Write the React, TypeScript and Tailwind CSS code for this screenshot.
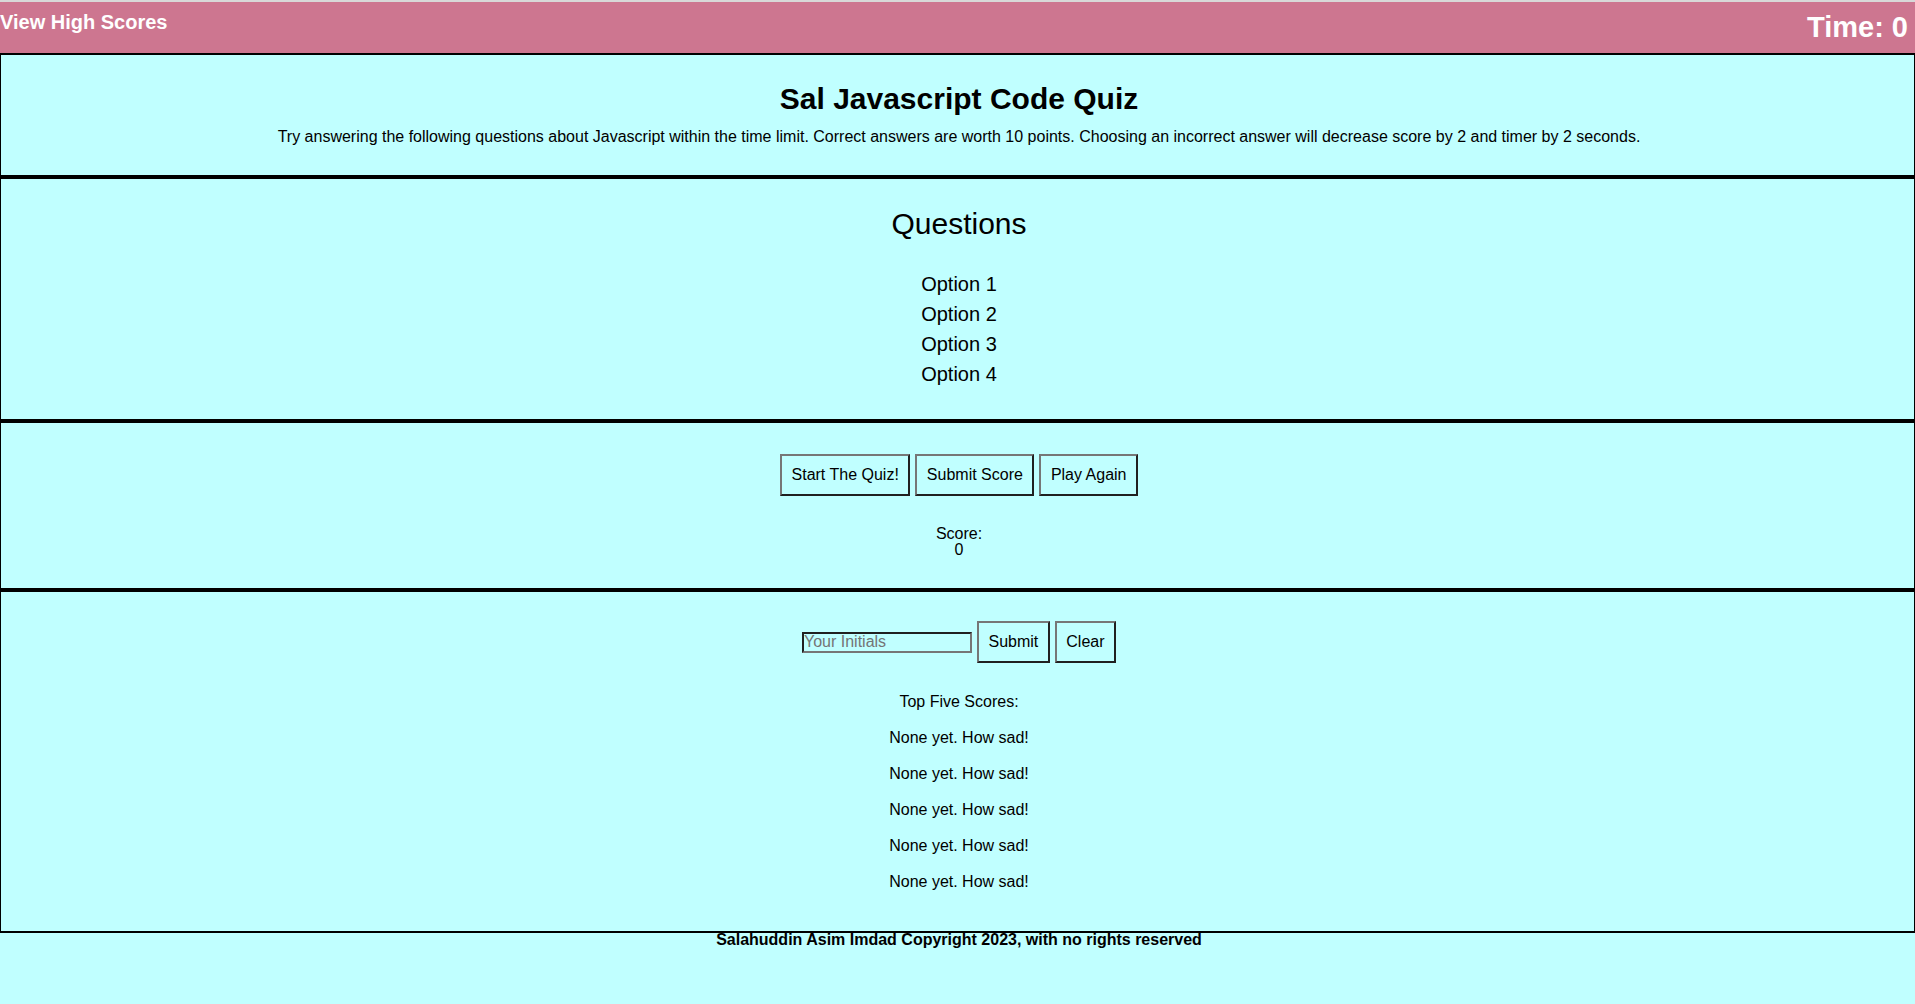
import React from "react";

const OPTIONS = ["Option 1", "Option 2", "Option 3", "Option 4"];
const TOP_SCORES = [
  "None yet. How sad!",
  "None yet. How sad!",
  "None yet. How sad!",
  "None yet. How sad!",
  "None yet. How sad!",
];

const btn =
  "h-[42px] px-[9.5px] text-[16px] leading-[18px] text-black bg-transparent border-2 border-t-[#767676] border-l-[#767676] border-b-[#202020] border-r-[#202020]";

function Section({
  className,
  children,
}: {
  className: string;
  children: React.ReactNode;
}) {
  return (
    <section
      className={`border-x border-t-2 border-b-2 border-black pl-[3px] flex flex-col items-center text-center ${className}`}
    >
      {children}
    </section>
  );
}

export default function App() {
  return (
    <div
      className="min-h-screen bg-[#c0ffff] text-black"
      style={{ fontFamily: '"Liberation Sans", Arial, sans-serif' }}
    >
      {/* Top bar */}
      <header className="h-[53px] border-t-2 border-[#d8d8d8] bg-[#cd7690] flex items-start justify-between pt-[9px] pr-[7px]">
        <a className="text-[20px] leading-[23px] font-bold text-white cursor-pointer">
          View High Scores
        </a>
        <span className="text-[29px] leading-[33px] font-bold text-white">
          Time: 0
        </span>
      </header>

      <main>
        {/* Intro */}
        <Section className="pt-[27px] pb-[29px]">
          <h1 className="text-[30px] leading-[34px] font-bold">
            Sal Javascript Code Quiz
          </h1>
          <p className="mt-[12px] text-[16px] leading-[18px]">
            Try answering the following questions about Javascript within the
            time limit. Correct answers are worth 10 points. Choosing an
            incorrect answer will decrease score by 2 and timer by 2 seconds.
          </p>
        </Section>

        {/* Question */}
        <Section className="pt-[28px] pb-[30px]">
          <h2 className="text-[30px] leading-[34px]">Questions</h2>
          <ul className="mt-[28px] text-[20px] leading-[30px]">
            {OPTIONS.map((o) => (
              <li key={o}>{o}</li>
            ))}
          </ul>
        </Section>

        {/* Controls */}
        <Section className="pt-[31px] pb-[30px]">
          <div className="flex gap-[5px]">
            <button className={btn}>Start The Quiz!</button>
            <button className={btn}>Submit Score</button>
            <button className={btn}>Play Again</button>
          </div>
          <div className="mt-[30px] text-[16px] leading-[16px]">
            <div>Score:</div>
            <div>0</div>
          </div>
        </Section>

        {/* High scores */}
        <Section className="pt-[29px] pb-[40px]">
          <div className="flex items-center gap-[5px]">
            <input
              placeholder="Your Initials"
              className="w-[170px] h-[21px] px-0 text-[16px] leading-none bg-transparent border-2 border-t-[#202020] border-l-[#202020] border-b-[#767676] border-r-[#767676] placeholder:text-[#757575] outline-none"
            />
            <button className={btn}>Submit</button>
            <button className={btn}>Clear</button>
          </div>
          <div className="mt-[30px] flex flex-col gap-[18px] text-[16px] leading-[18px]">
            <p>Top Five Scores:</p>
            {TOP_SCORES.map((s, i) => (
              <p key={i}>{s}</p>
            ))}
          </div>
        </Section>
      </main>

      <footer className="pl-[3px] text-center text-[16px] leading-[14px] font-bold">
        Salahuddin Asim Imdad Copyright 2023, with no rights reserved
      </footer>
    </div>
  );
}
